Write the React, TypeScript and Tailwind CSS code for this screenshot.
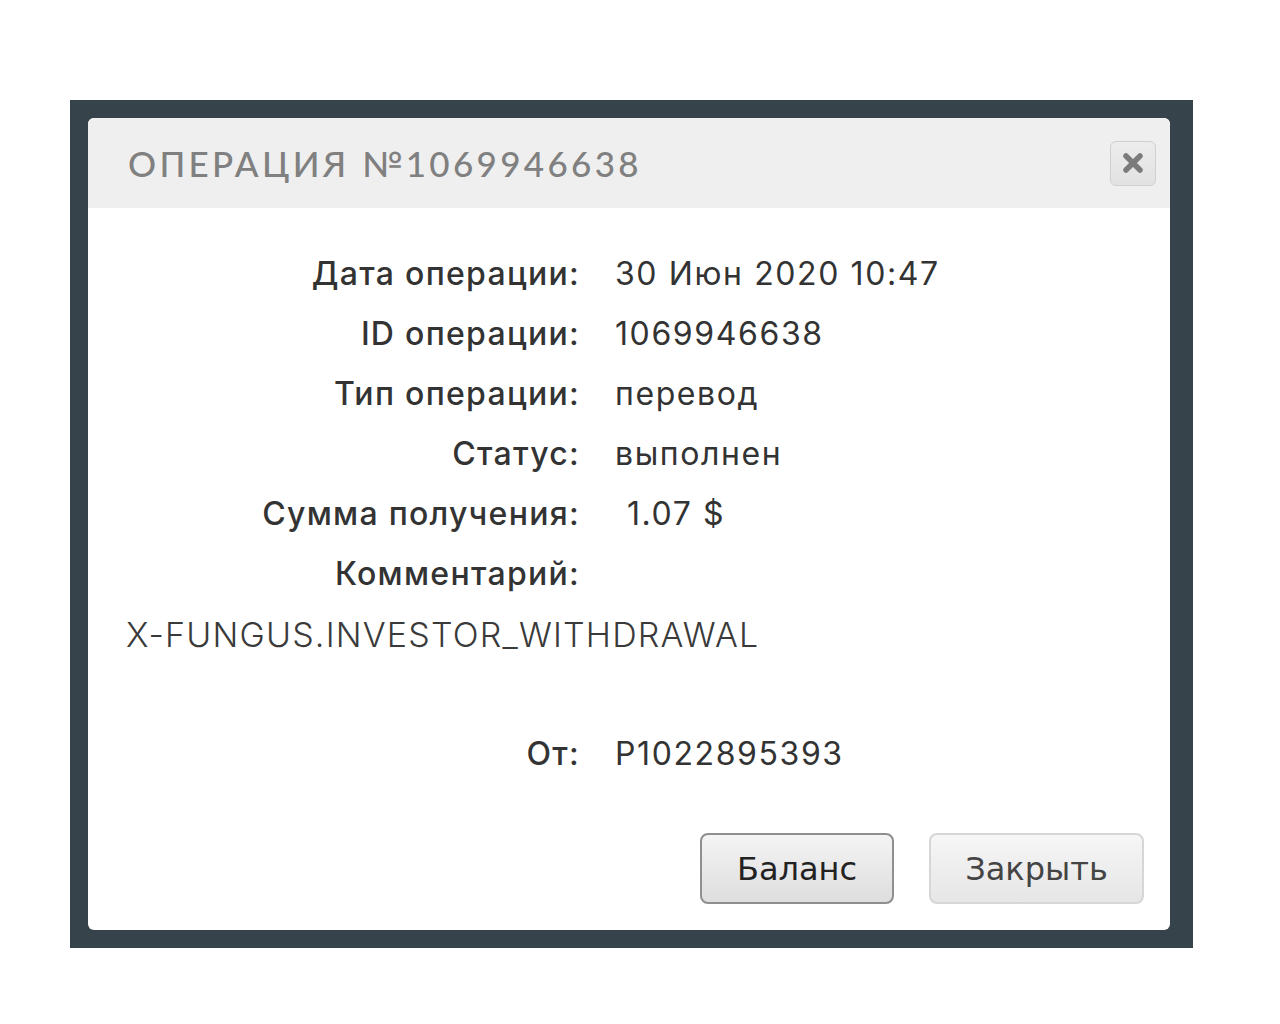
import * as React from 'react';

const rows: { label: string; value: string; pad: string }[] = [
  { label: 'Дата операции:', value: '30 Июн 2020 10:47', pad: 'pl-[35px]' },
  { label: 'ID операции:', value: '1069946638', pad: 'pl-[35px]' },
  { label: 'Тип операции:', value: 'перевод', pad: 'pl-[35px]' },
  { label: 'Статус:', value: 'выполнен', pad: 'pl-[35px]' },
  { label: 'Сумма получения:', value: '1.07 $', pad: 'pl-[47px]' },
  { label: 'Комментарий:', value: '', pad: 'pl-[35px]' },
];

function CloseIcon() {
  return (
    <svg width="22" height="22" viewBox="0 0 22 22" aria-hidden="true">
      <path d="M4 4 L18 18 M18 4 L4 18" stroke="#7b7b7b" strokeWidth="5.5" strokeLinecap="round" />
    </svg>
  );
}

export default function App() {
  return (
    <div className="min-h-[1024px] w-[1280px] bg-white pt-[100px] pl-[70px]">
      <div className="w-[1123px] h-[848px] bg-[#37434b] p-[18px]">
        <div
          className="w-[1082px] h-[812px] bg-white rounded-md flex flex-col text-[#333]"
          style={{ fontFamily: 'Inter, "Open Sans", sans-serif' }}
        >
          {/* header */}
          <div className="h-[90px] bg-[#efefef] rounded-t-md flex items-center justify-between pl-[40px] pr-[14px]">
            <h2
              className="text-[35px] tracking-[0.095em] text-[#808080] font-medium"
              style={{ fontFamily: 'Lato, "Open Sans", sans-serif' }}
            >
              ОПЕРАЦИЯ №1069946638
            </h2>
            <button
              type="button"
              className="w-[46px] h-[45px] rounded-md border border-[#d0d0d0] bg-gradient-to-b from-[#ececec] to-[#e2e2e2] flex items-center justify-center"
            >
              <CloseIcon />
            </button>
          </div>

          {/* body */}
          <div className="flex-1 flex flex-col pt-[36px] pl-[38px] pr-[26px]">
            {rows.map((r) => (
              <div key={r.label} className="h-[60px] flex items-center text-[32px]">
                <div className="w-[454px] text-right font-medium tracking-[0.04em]">{r.label}</div>
                <div className={`${r.pad} font-normal tracking-[0.05em]`}>{r.value}</div>
              </div>
            ))}
            <div className="h-[60px] flex items-center text-[34px] text-[#3a3a3a] font-light tracking-[0.035em]">
              X-FUNGUS.INVESTOR_WITHDRAWAL
            </div>
            <div className="h-[60px]" />
            <div className="h-[60px] flex items-center text-[32px]">
              <div className="w-[454px] text-right font-medium tracking-[0.04em]">От:</div>
              <div className="pl-[35px] tracking-[0.05em]">P1022895393</div>
            </div>

            <div
              className="mt-auto mb-[26px] flex justify-end gap-[35px]"
              style={{ fontFamily: '"DejaVu Sans", Verdana, sans-serif' }}
            >
              <button
                type="button"
                className="w-[194px] h-[71px] rounded-lg border-2 border-[#8f8f8f] bg-gradient-to-b from-[#f4f4f4] to-[#dedede] text-[32px] text-[#222]"
              >
                Баланс
              </button>
              <button
                type="button"
                className="w-[215px] h-[71px] rounded-lg border-2 border-[#d6d6d6] bg-gradient-to-b from-[#f6f6f6] to-[#e6e6e6] text-[32px] text-[#444]"
              >
                Закрыть
              </button>
            </div>
          </div>
        </div>
      </div>
    </div>
  );
}
